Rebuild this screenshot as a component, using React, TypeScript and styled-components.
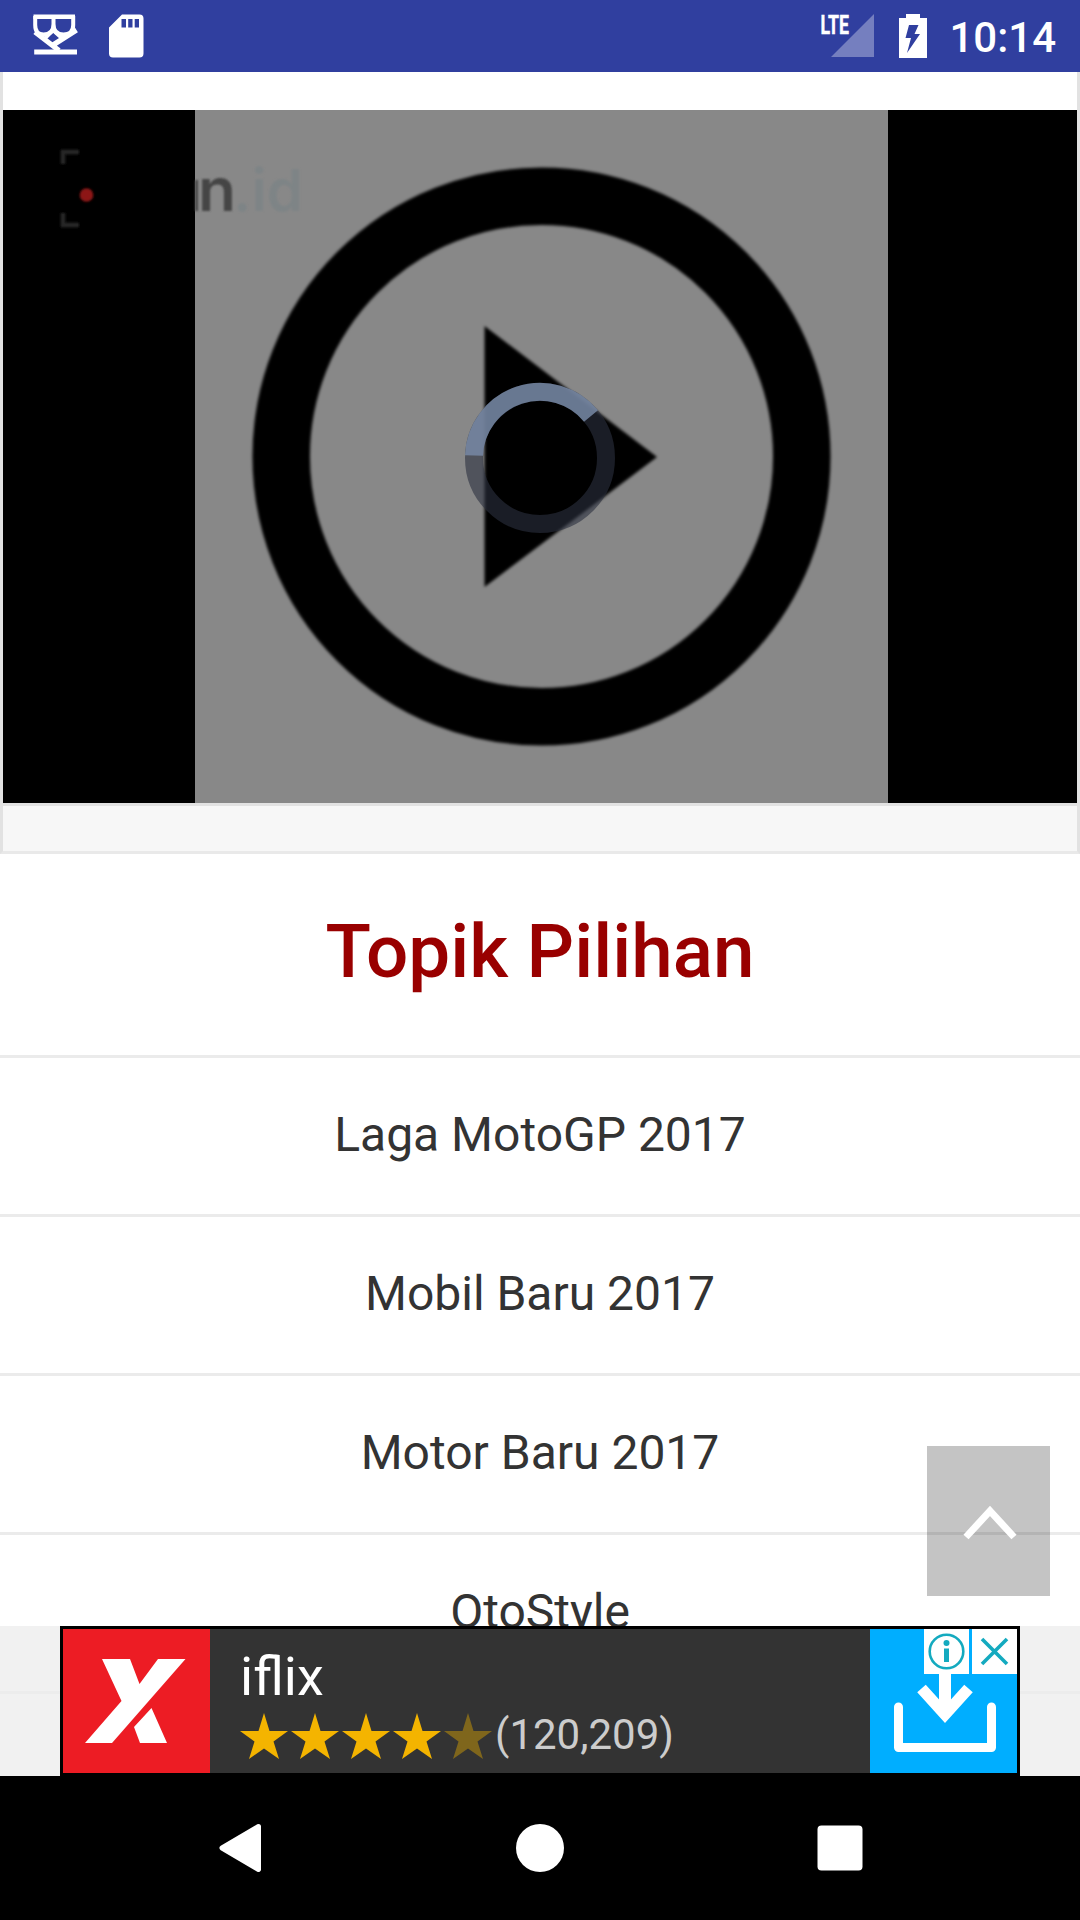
import React from "react";
import styled, { createGlobalStyle } from "styled-components";

const GlobalStyle = createGlobalStyle`
  * { box-sizing: border-box; }
  html, body { margin: 0; padding: 0; background: #fff; }
  body { font-family: Roboto, "Liberation Sans", sans-serif; }
  svg { display: block; flex: none; }
`;

const Screen = styled.div`
  width: 1080px;
  height: 1920px;
  display: flex;
  flex-direction: column;
  overflow: hidden;
  background: #fff;
`;

const StatusBar = styled.header`
  height: 72px;
  flex: none;
  display: flex;
  justify-content: space-between;
  background: #303f9f;
  color: #fff;
  padding: 0 24px 0 33px;
`;

const StatusGroup = styled.div<{ $gap: number }>`
  display: flex;
  gap: ${(p) => p.$gap}px;
`;

const Clock = styled.time`
  font-size: 42px;
  font-weight: 500;
  line-height: 49px;
  padding-top: 13px;
  margin-left: 22px;
`;

const Page = styled.main`
  position: relative;
  flex: 1;
  min-height: 0;
  overflow: hidden;
`;

const VideoCard = styled.section`
  border: 3px solid #e2e2e2;
  border-top: 0;
  border-bottom-color: #e9e9e9;
  padding-top: 38px;
`;

const Player = styled.div`
  height: 693px;
  background: #000;
`;

const CardFooter = styled.div`
  height: 48px;
  border-top: 3px solid #e2e2e2;
  background: #f7f7f7;
`;

const TopicTitle = styled.h2`
  margin: 0;
  height: 204px;
  padding-top: 54px;
  border-bottom: 3px solid #ebebeb;
  text-align: center;
  font-size: 74.6px;
  line-height: 88px;
  font-weight: 500;
  color: #990000;
`;

const TopicList = styled.ul`
  list-style: none;
  margin: 0;
  padding: 0;
`;

const Topic = styled.li`
  height: 159px;
  padding-top: 49px;
  border-bottom: 3px solid #ebebeb;
  text-align: center;
  font-size: 48px;
  line-height: 56px;
  color: #333;
`;

const ScrollTop = styled.button`
  position: absolute;
  left: 927px;
  top: 1374px;
  width: 123px;
  height: 150px;
  padding: 0;
  border: 0;
  background: rgba(0, 0, 0, 0.23);
`;

const AdStrip = styled.aside`
  position: absolute;
  left: 0;
  right: 0;
  bottom: 0;
  height: 150px;
  padding: 0 60px;
  background: rgba(236, 236, 236, 0.75);
`;

const Ad = styled.div`
  display: flex;
  height: 150px;
  border: 3px solid #000;
  background: #333;
`;

const AdCopy = styled.div`
  flex: 1;
  padding: 20px 0 0 30px;
`;

const AdName = styled.div`
  font-size: 54px;
  line-height: 56px;
  color: #fff;
`;

const Rating = styled.div`
  display: flex;
  align-items: flex-start;
  height: 59px;
  font-size: 42px;
  line-height: 59px;
  color: #ccc;
`;

const Download = styled.div`
  position: relative;
  width: 147px;
  background: #00aeff;
`;

const AdControls = styled.div`
  position: absolute;
  top: 0;
  right: 0;
  display: flex;
  gap: 3px;
`;

const AdControl = styled.div`
  width: 45px;
  height: 45px;
  background: #fff;
`;

const NavBar = styled.nav`
  height: 144px;
  flex: none;
  background: #000;
  display: flex;
  justify-content: space-between;
  align-items: center;
  padding: 0 210px;
`;

const topics = ["Laga MotoGP 2017", "Mobil Baru 2017", "Motor Baru 2017", "OtoStyle"];

const DebugIcon = () => (
  <svg width="45" height="72" viewBox="33 0 45 72" fill="none" stroke="#fff">
    <path d="M33.500 16.800H75" strokeWidth="4.600" />
    <path d="M35.200 16V25Q35.200 34.500 43.500 34.500Q53.500 34.500 53.500 24V17M53.500 24Q53.500 34.500 63.500 34.500Q73.200 34.500 73.200 25V16" strokeWidth="4" />
    <path d="M35 32L59 50.500M76.500 30L53 45" strokeWidth="5.200" />
    <path d="M45 38.500L53 30.500L62 38.500" strokeWidth="3.500" />
    <path d="M34.200 52H77" strokeWidth="5.200" />
  </svg>
);

const SdCardIcon = () => (
  <svg width="35" height="72" viewBox="109 0 35 72">
    <path fill="#fff" fillRule="evenodd" d="M122 14.500H139.500Q143.500 14.500 143.500 18.500V53.500Q143.500 57.500 139.500 57.500H113Q109 57.500 109 53.500V27.500ZM121.500 19V27.500H126V19ZM128.200 19V27.500H132.500V19ZM134.700 19V27.500H139V19Z" />
  </svg>
);

const SignalIcon = () => (
  <svg width="55" height="72" viewBox="820 0 55 72">
    <path d="M831 57L874 14V57Z" fill="#757fbf" />
    <text x="820.500" y="33.500" fill="#fff" stroke="#fff" strokeWidth="0.5" fontFamily="Roboto, sans-serif" fontSize="26" fontWeight="700" textLength="28.500" lengthAdjust="spacingAndGlyphs">LTE</text>
  </svg>
);

const BatteryIcon = () => (
  <svg width="28" height="72" viewBox="899 0 28 72">
    <path fill="#fff" fillRule="evenodd" d="M906 14H920V18H927V58H899V18H906ZM909 25L905.500 38H911L907 53L920 34H914.500L918.500 25Z" />
  </svg>
);

const VideoThumb = () => (
  <svg width="1074" height="693" viewBox="3 110 1074 693">
    <defs>
      <filter id="soft" filterUnits="userSpaceOnUse" x="195" y="110" width="693" height="693">
        <feGaussianBlur stdDeviation="1.6" />
      </filter>
      <filter id="faint" filterUnits="userSpaceOnUse" x="40" y="130" width="300" height="110">
        <feGaussianBlur stdDeviation="1.2" />
      </filter>
    </defs>
    <rect x="195" y="110" width="693" height="693" fill="#888" />
    <g filter="url(#soft)">
      <circle cx="541.500" cy="456.500" r="260.300" fill="none" stroke="#000" strokeWidth="57.500" />
      <path d="M484.500 326L657 457L484.500 587Z" />
    </g>
    <g filter="url(#faint)">
      <path d="M63 164V152H79M63 213V225H79" fill="none" stroke="#262626" strokeWidth="4.500" />
      <circle cx="86.500" cy="195" r="6.800" fill="#8d1717" />
      <path d="M196.500 180V211" stroke="#4a4a4a" strokeWidth="3" />
      <text x="198" y="211" fontFamily="Inter, sans-serif" fontSize="59" fontWeight="600" fill="#454545" textLength="38" lengthAdjust="spacingAndGlyphs">n</text>
      <text x="233" y="211" fontFamily="Inter, sans-serif" fontSize="58" fontWeight="600" fill="#7e8486">.id</text>
    </g>
    <circle cx="540" cy="458" r="66" fill="none" stroke="#2b303f" strokeOpacity="0.6" strokeWidth="18" />
    <path d="M474 455.500A66 66 0 0 1 591 416" fill="none" stroke="#7788a4" strokeOpacity="0.85" strokeWidth="18" />
  </svg>
);

const Stars = () => (
  <svg width="255" height="52" viewBox="240 1705 255 52" overflow="visible">
    {[0, 1, 2, 3, 4].map((i) => (
      <path
        key={i}
        transform={`translate(${i * 51} 0)`}
        fill={i < 4 ? "#f4b400" : "#7f661c"}
        d="M264 1713L269.500 1731H288L273.500 1741.500L279 1759L264 1748.500L249 1759L254.500 1741.500L240 1731H258.500Z"
      />
    ))}
  </svg>
);

export default function App() {
  return (
    <>
      <GlobalStyle />
      <Screen>
        <StatusBar>
          <StatusGroup $gap={31}>
            <DebugIcon />
            <SdCardIcon />
          </StatusGroup>
          <StatusGroup $gap={0}>
            <StatusGroup $gap={24}>
              <SignalIcon />
              <BatteryIcon />
            </StatusGroup>
            <Clock>10:14</Clock>
          </StatusGroup>
        </StatusBar>

        <Page>
          <VideoCard>
            <Player>
              <VideoThumb />
            </Player>
            <CardFooter />
          </VideoCard>
          <TopicTitle>Topik Pilihan</TopicTitle>
          <TopicList>
            {topics.map((t) => (
              <Topic key={t}>{t}</Topic>
            ))}
          </TopicList>

          <ScrollTop aria-label="Up">
            <svg width="123" height="150" viewBox="927 1446 123 150">
              <path d="M966 1537L990 1511L1014 1537" fill="none" stroke="#fff" strokeWidth="7" />
            </svg>
          </ScrollTop>

          <AdStrip>
            <Ad>
              <svg width="147" height="144" viewBox="63 1629 147 144">
                <rect x="63" y="1629" width="147" height="144" fill="#ed1c24" />
                <path fill="#fff" d="M102 1659H130L139.500 1684L158 1659H185.500L112 1743H85L121.500 1701ZM151.500 1708L167 1743H140L134 1727Z" />
              </svg>
              <AdCopy>
                <AdName>iflix</AdName>
                <Rating>
                  <Stars />
                  (120,209)
                </Rating>
              </AdCopy>
              <Download>
                <svg width="147" height="144" viewBox="870 1629 147 144" fill="none" stroke="#fff">
                  <path d="M898.500 1707V1747.500H991.500V1707" strokeWidth="9" strokeLinecap="round" strokeLinejoin="round" />
                  <path d="M945 1670V1710" strokeWidth="12" />
                  <path d="M921.500 1688.500L945 1714.500L968.500 1688.500" strokeWidth="11.500" />
                </svg>
                <AdControls>
                  <AdControl>
                    <svg width="45" height="45" viewBox="0 0 45 45">
                      <circle cx="22.500" cy="22.500" r="16.800" fill="none" stroke="#14aabf" strokeWidth="2.600" />
                      <circle cx="22.500" cy="14" r="3" fill="#14aabf" />
                      <rect x="20" y="19.500" width="5" height="13.500" fill="#14aabf" />
                    </svg>
                  </AdControl>
                  <AdControl>
                    <svg width="45" height="45" viewBox="0 0 45 45">
                      <path d="M10 10L35 35M35 10L10 35" stroke="#14aabf" strokeWidth="3.600" />
                    </svg>
                  </AdControl>
                </AdControls>
              </Download>
            </Ad>
          </AdStrip>
        </Page>

        <NavBar>
          <svg width="60" height="60" viewBox="210 1818 60 60">
            <path d="M258.500 1826.500L222 1848L258.500 1869.500Z" fill="#fff" stroke="#fff" strokeWidth="5" strokeLinejoin="round" />
          </svg>
          <svg width="60" height="60" viewBox="0 0 60 60">
            <circle cx="30" cy="30" r="24" fill="#fff" />
          </svg>
          <svg width="60" height="60" viewBox="0 0 60 60">
            <rect x="7.500" y="7.500" width="45" height="45" rx="4" fill="#fff" />
          </svg>
        </NavBar>
      </Screen>
    </>
  );
}
